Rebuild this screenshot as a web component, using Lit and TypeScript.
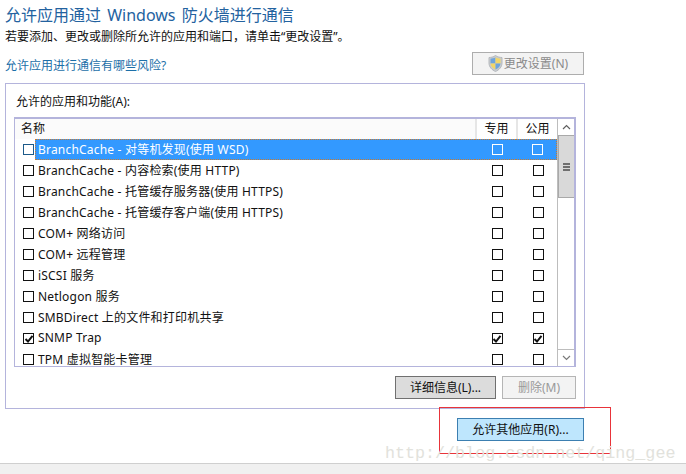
import { LitElement, html, css, svg } from "lit";
import { customElement } from "lit/decorators.js";

const rows: [string, boolean][] = [
  ["BranchCache - 对等机发现(使用 WSD)", false],
  ["BranchCache - 内容检索(使用 HTTP)", false],
  ["BranchCache - 托管缓存服务器(使用 HTTPS)", false],
  ["BranchCache - 托管缓存客户端(使用 HTTPS)", false],
  ["COM+ 网络访问", false],
  ["COM+ 远程管理", false],
  ["iSCSI 服务", false],
  ["Netlogon 服务", false],
  ["SMBDirect 上的文件和打印机共享", false],
  ["SNMP Trap", true],
  ["TPM 虚拟智能卡管理", false],
];

const check = svg`<svg class="tick" viewBox="0 0 10 10" width="10" height="10"><path d="M1.5 5 L4 7.5 L8.5 1.8" fill="none" stroke="#111" stroke-width="2"/></svg>`;

@customElement("app-root")
export class AppRoot extends LitElement {
  static styles = css`
    :host {
      display: flex;
      flex-direction: column;
      position: relative;
      width: 686px;
      height: 474px;
      overflow: hidden;
      background: #fff;
      font-family: "Noto Sans", "Noto Sans CJK SC", sans-serif;
      font-size: 12px;
      color: #111;
    }
    .main { flex: 1; padding: 5px 102px 0 5px; display: flex; flex-direction: column; min-height: 0; }
    .title { font-size: 16px; line-height: 20px; color: #23629f; white-space: nowrap; word-spacing: 2px; font-family: "Noto Sans", "Noto Sans CJK SC", sans-serif; }
    .sub { line-height: 16px; margin-top: 4px; white-space: nowrap; }
    .linkrow { display: flex; justify-content: space-between; align-items: flex-start; margin-top: 7px; }
    .link { color: #1c6fa8; line-height: 16px; margin-top: 6px; }
    .btn {
      box-sizing: border-box; height: 23px; display: flex; align-items: center; justify-content: center;
      border: 1px solid #adadad; background: #f3f3f3; color: #111; line-height: 1; white-space: nowrap;
    }
    .change { width: 112px; color: #8a8a8a; gap: 1px; }
    .group {
      box-sizing: border-box; width: 580px; height: 326px; margin-top: 8px; border: 1px solid #b4b4dc;
      padding: 10px 8px 0 8px; display: flex; flex-direction: column;
    }
    .label { line-height: 16px; margin-left: 2px; }
    .list {
      box-sizing: border-box; width: 562px; height: 250px; margin-top: 7px; border: 1px solid #b4b4dc; border-top-width: 2px; border-right-width: 2px;
      display: flex; overflow: hidden;
    }
    .table { flex: 1; min-width: 0; display: flex; flex-direction: column; }
    .head { display: grid; grid-template-columns: 1fr 41px 41px; height: 20px; background: #fcfcfc; flex: none; }
    .head div { display: flex; align-items: center; justify-content: center; border-left: 2px solid #e6e6e6; box-sizing: border-box; background: #fff; padding-bottom: 2px; }
    .head div:first-child { justify-content: flex-start; border-left: 0; padding-left: 6px; background: #fbfbfb; }
    .row { display: grid; grid-template-columns: 20px 1fr 41px 41px; height: 21px; flex: none; }
    .cell { display: flex; align-items: center; justify-content: center; }
    .col { padding-left: 3px; box-sizing: border-box; }
    .text { display: flex; align-items: center; white-space: nowrap; letter-spacing: 0.2px; height: 21px; padding: 0 0 2px 3px; box-sizing: border-box; }
    .first { padding-left: 8px; justify-content: flex-start; }
    .sel .text, .sel .col { background: #3399ff; color: #fff; }
    .sel .text { border-top: 1px dotted #c87a30; border-bottom: 1px dotted #c87a30; border-left: 1px dotted #c87a30; padding-left: 2px; }
    .sel .col { border-top: 1px dotted #c87a30; border-bottom: 1px dotted #c87a30; }
    .sel .col:last-child { border-right: 1px dotted #c87a30; }
    .box { box-sizing: border-box; width: 11px; height: 11px; border: 1px solid #111; display: flex; align-items: center; justify-content: center; background: transparent; }
    .sel .first .box { border-color: #1c5a89; }
    .sel .col .box { border-color: #fff; }
    .tick { flex: none; }
    .scroll { width: 17px; flex: none; display: flex; flex-direction: column; border-left: 1px solid #bdbdbd; box-sizing: border-box; background: #fff; }
    .arrow { height: 16px; flex: none; display: flex; align-items: center; justify-content: center; }
    .arrow.down { border-top: 1px solid #bdbdbd; height: 16px; }
    .thumb { height: 63px; box-sizing: border-box; flex: none; background: #d9d9d9; border: 1px solid #a9a9a9; border-right: 0; display: flex; flex-direction: column; align-items: center; justify-content: center; gap: 1px; }
    .thumb i { display: block; width: 7px; height: 2px; background: #6f6f6f; }
    .track { flex: 1; }
    .actions { display: flex; justify-content: flex-end; gap: 6px; margin-top: 9px; }
    .details { width: 101px; background: #dcdcdc; border-color: #707070; }
    .del { width: 74px; color: #999; border-color: #b5b5b5; }
    .allow-row { display: flex; justify-content: flex-end; margin-top: 9px; }
    .allow { width: 127px; background: #bee6fd; border-color: #3c7fb1; }
    .footer { height: 10px; flex: none; background: #f0f0f0; border-top: 1px solid #cfcfcf; }
    .annot { position: absolute; left: 439px; top: 407px; width: 172px; height: 47px; box-sizing: border-box; border: 1px solid #e8343a; pointer-events: none; }
    .mark { position: absolute; left: 385px; top: 444px; font-family: "Liberation Mono", monospace; font-size: 16.7px; line-height: 20px; color: #e2e2dc; white-space: nowrap; }
  `;

  private box(checked: boolean) {
    return html`<span class="box">${checked ? check : ""}</span>`;
  }

  render() {
    return html`
      <div class="main">
        <div class="title">允许应用通过 Windows 防火墙进行通信</div>
        <div class="sub">若要添加、更改或删除所允许的应用和端口，请单击“更改设置”。</div>
        <div class="linkrow">
          <div class="link">允许应用进行通信有哪些风险?</div>
          <div class="btn change">
            <svg width="15" height="17" viewBox="0 0 15 17">
              <path d="M7.5 .5 C5.5 2 3 2.5 1 2.5 V8 C1 12 4 15 7.5 16.5 C11 15 14 12 14 8 V2.5 C12 2.5 9.5 2 7.5 .5Z" fill="#c8ccd0" stroke="#b5b8bc" />
              <path d="M7.5 2.3 C6 3.3 4.2 3.7 2.5 3.8 V8.5 H7.5Z" fill="#6ea4dc"/>
              <path d="M7.5 2.3 C9 3.3 10.8 3.7 12.5 3.8 V8.5 H7.5Z" fill="#f1d668"/>
              <path d="M2.5 8.5 H7.5 V14.6 C5 13.5 2.7 11.5 2.5 8.5Z" fill="#f1d668"/>
              <path d="M12.5 8.5 H7.5 V14.6 C10 13.5 12.3 11.5 12.5 8.5Z" fill="#6ea4dc"/>
            </svg>
            <span>更改设置(N)</span>
          </div>
        </div>
        <div class="group">
          <div class="label">允许的应用和功能(A):</div>
          <div class="list">
            <div class="table">
              <div class="head"><div>名称</div><div>专用</div><div>公用</div></div>
              ${rows.map(
                ([name, on], i) => html`
                  <div class="row ${i === 0 ? "sel" : ""}">
                    <div class="cell first">${this.box(on)}</div>
                    <div class="text">${name}</div>
                    <div class="cell col">${this.box(on)}</div>
                    <div class="cell col">${this.box(on)}</div>
                  </div>
                `
              )}
            </div>
            <div class="scroll">
              <div class="arrow"><svg width="9" height="6" viewBox="0 0 9 6"><path d="M1 5 L4.5 1.5 L8 5" fill="none" stroke="#606060" stroke-width="1.2"/></svg></div>
              <div class="thumb"><i></i><i></i><i></i></div>
              <div class="track"></div>
              <div class="arrow down"><svg width="9" height="6" viewBox="0 0 9 6"><path d="M1 1 L4.5 4.5 L8 1" fill="none" stroke="#7a7a7a" stroke-width="1.2"/></svg></div>
            </div>
          </div>
          <div class="actions">
            <div class="btn details">详细信息(L)...</div>
            <div class="btn del">删除(M)</div>
          </div>
        </div>
        <div class="allow-row"><div class="btn allow">允许其他应用(R)...</div></div>
      </div>
      <div class="footer"></div>
      <div class="annot"></div>
      <div class="mark">http://blog.csdn.net/qing_gee</div>
    `;
  }
}
